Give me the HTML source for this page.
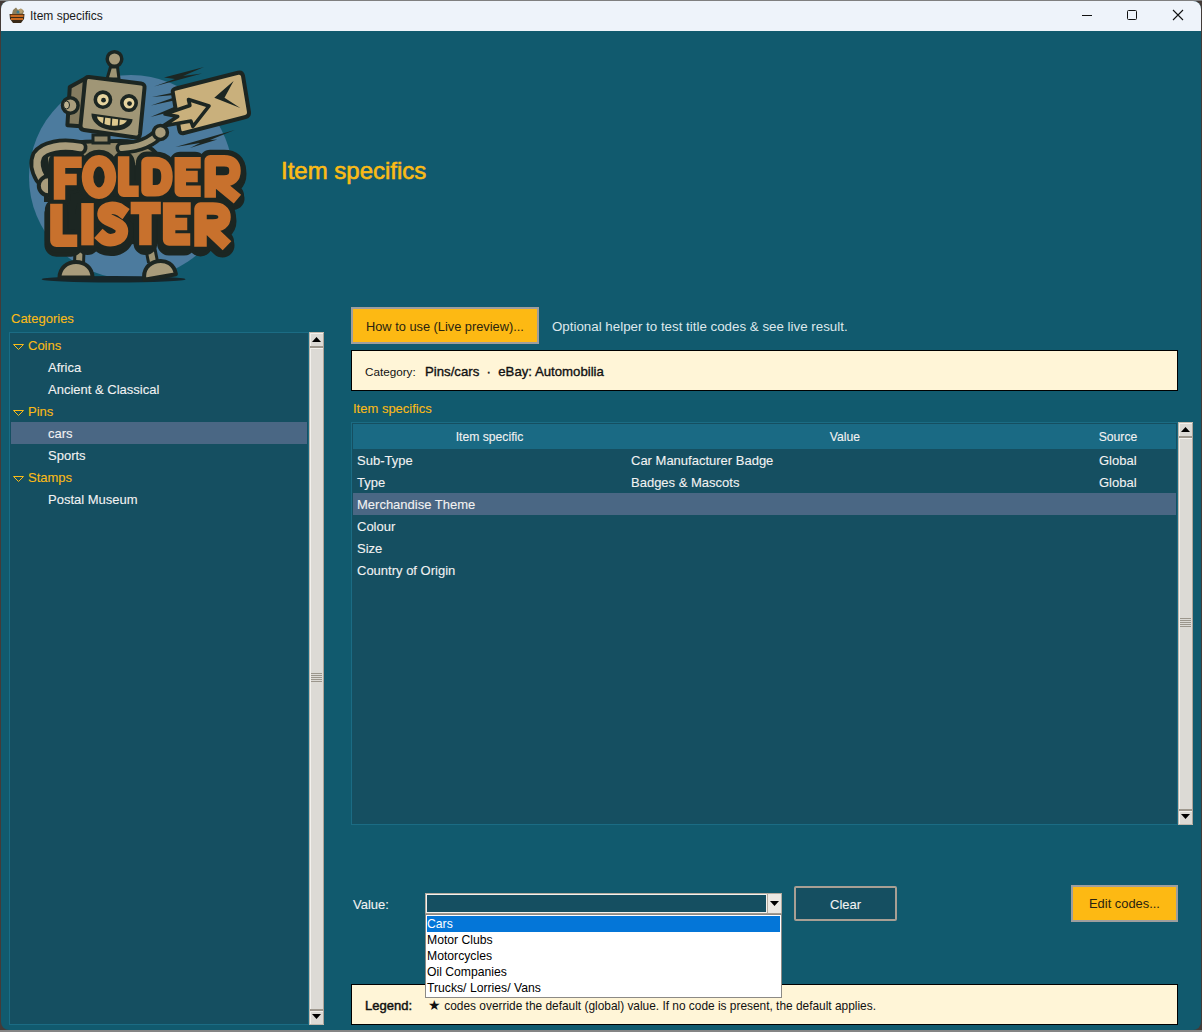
<!DOCTYPE html>
<html><head><meta charset="utf-8">
<style>
*{margin:0;padding:0;box-sizing:border-box}
html,body{width:1202px;height:1032px;overflow:hidden;background:#443b38;font-family:"Liberation Sans",sans-serif}
#win{position:absolute;left:1px;top:1px;width:1200px;height:1029px;background:#115a6e;border-radius:8px;overflow:hidden}
#title{position:absolute;left:1px;top:1px;width:1200px;height:30px;background:#eef3fa;border-radius:8px 8px 0 0}
.t{position:absolute;white-space:nowrap;line-height:1}
.y{color:#fbbb16;-webkit-text-stroke:0.1px #fbbb16}
.w{color:#f2f2f2;-webkit-text-stroke:0.1px #f2f2f2}
.panel{position:absolute;background:#154f61;border:1px solid #1b6c84}
.sb{position:absolute;background:#dcdad5;border-left:1px solid #f4f2ee;border-right:1px solid #a39d95}
.row{position:absolute;height:22px}
.sel{background:#4a6784}
.cream{position:absolute;background:#fff5d7;border:1px solid #000}
.btny{position:absolute;background:#fdb913;border:2px solid #9e9e9e}
.tri{position:absolute}
</style></head><body>
<div style="position:absolute;left:0;top:1030px;width:1202px;height:2px;background:#858585"></div>
<div style="position:absolute;left:0;top:0;width:1202px;height:1px;background:#7f7f7f"></div>
<div id="win"></div>
<div id="title"></div>
<div class="t" style="left:30px;top:10px;font-size:12px;color:#1a1a1a">Item specifics</div>


<div style="position:absolute;left:1082px;top:15px;width:10px;height:1px;background:#111"></div>
<div style="position:absolute;left:1127px;top:10px;width:10px;height:10px;border:1px solid #111;border-radius:1.5px"></div>
<svg style="position:absolute;left:1172px;top:9px" width="12" height="12"><path d="M1 1 L11 11 M11 1 L1 11" stroke="#111" stroke-width="1.1"/></svg>

<svg style="position:absolute;left:8px;top:6px" width="18" height="18" viewBox="0 0 18 18">
<path d="M5 4 L8 1.5 L10 4 L13 2.5 L16 5 L15 8 L4 8 Z" fill="#8c7d5a"/>
<circle cx="12.5" cy="5" r="2.3" fill="#b79e6e"/>
<circle cx="10" cy="6" r="1.5" fill="#3d7a8c"/>
<path d="M1.5 8 L16.5 8 L16 13 L13 17 L5 17 L2 13 Z" fill="#3a2a18"/>
<path d="M2.5 8.8 H15.5 V11 H2.5 Z M3 12 H15 V14 H3 Z" fill="#c86a20"/>
</svg>
<!-- LOGO -->
<svg style="position:absolute;left:0;top:0" width="300" height="300" viewBox="0 0 300 300">
  <defs>
    <clipPath id="circ"><rect x="0" y="0" width="300" height="277"/></clipPath>
  </defs>
  <circle cx="131" cy="177" r="102" fill="#4c7b9e" clip-path="url(#circ)"/>
  <ellipse cx="113.6" cy="279.3" rx="72" ry="3.2" fill="#16262a"/>
  <!-- speed lines -->
  <g fill="#1c2622">
    <path d="M164 77.5 L204 67 L183 76 L202 73.5 L154 86.5 L175 79 Z"/>
    <path d="M152 97 L174 92.5 L174 95 Z"/>
    <path d="M151 105.5 L174 97.5 L174 100.5 Z"/>
    <path d="M150.5 117 L174 107 L174 111 Z"/>
    <path d="M175.5 147 L234.7 130 L210 140 L217.4 139.5 L190 148 L200 143 Z"/>
  </g>
  <!-- legs -->
  <path d="M79.5 250 L79 264" stroke="#1c2622" stroke-width="12"/>
  <path d="M79.5 250 L79 265" stroke="#9f9574" stroke-width="6"/>
  <path d="M150 247 L153 262" stroke="#1c2622" stroke-width="12"/>
  <path d="M150 247 L153 262" stroke="#9f9574" stroke-width="6"/>
  <path d="M59.5 277.6 C59.5 268 67 262 76 262 C85 262 92.5 268 92.5 277.6 Z" fill="#a89c7b" stroke="#1c2622" stroke-width="4" stroke-linejoin="round"/>
  <g transform="rotate(-10 160 276)">
    <path d="M144 277 C144 267 151 261 160 261 C169 261 176 267 176 277 Z" fill="#a89c7b" stroke="#1c2622" stroke-width="4" stroke-linejoin="round"/>
  </g>
  <!-- torso -->
  <path d="M46 150 C60 142 90 141 120 141 C140 141 152 146 158 156 L160 200 L46 200 Z" fill="#8f8668" stroke="#1c2622" stroke-width="4"/>
  <!-- left arm -->
  <path d="M80 147.5 C62 144 44 147 38.5 156 C35 164 38 172 41.5 178" fill="none" stroke="#1c2622" stroke-width="15" stroke-linecap="round"/>
  <path d="M80 147.5 C62 144 44 147 38.5 156 C35 164 38 172 41.5 178" fill="none" stroke="#a89c7b" stroke-width="7.5" stroke-linecap="round"/>
  <circle cx="48.3" cy="185.8" r="9.5" fill="#a89c7b" stroke="#1c2622" stroke-width="4"/>
  <!-- right arm -->
  <path d="M122 148 C140 147 152 142 160 132" fill="none" stroke="#1c2622" stroke-width="13" stroke-linecap="round"/>
  <path d="M122 148 C140 147 152 142 160 132" fill="none" stroke="#a39979" stroke-width="6" stroke-linecap="round"/>
  <!-- envelope -->
  <path d="M176 88.5 L238 72.8 Q242 71.8 243 75.8 L249 112 Q249.6 116 245.6 117 L184 133 Q180 134 179.3 130 L172.8 92.5 Q172 89.5 176 88.5 Z" fill="#c9b07c" stroke="#1c2622" stroke-width="4" stroke-linejoin="round"/>
  <path d="M214.3 97.7 L233.6 81 L224.5 97.7 L240.3 107.9 Z" fill="#1c2622"/>
  <!-- arrow -->
  <path d="M163 126 L177.7 116.5 L165 114 L189.9 105.5 L188.5 99.5 L209 106 L192.9 126.5 L190.9 121 Z" fill="#c9b07c" stroke="#1c2622" stroke-width="3.6" stroke-linejoin="round"/>
  <circle cx="160.4" cy="132.4" r="7" fill="#a89c7b" stroke="#1c2622" stroke-width="3.5"/>
  <!-- neck -->
  <rect x="93" y="135" width="16" height="8" fill="#8f8668" stroke="#1c2622" stroke-width="3"/>
  <!-- antenna -->
  <path d="M110.5 67 L117.5 67 L119 79 L107 79 Z" fill="#9f9574" stroke="#1c2622" stroke-width="3" stroke-linejoin="round"/>
  <circle cx="114.5" cy="59" r="7.3" fill="#a89c7b" stroke="#1c2622" stroke-width="3.5"/>
  <!-- side block -->
  <path d="M69.8 86.9 L84.9 78.7 L83.7 126.4 L67.4 125.2 Z" fill="#857c60" stroke="#1c2622" stroke-width="4" stroke-linejoin="round"/>
  <circle cx="70.3" cy="105.5" r="7.8" fill="#a89c7b" stroke="#1c2622" stroke-width="3.5"/>
  <ellipse cx="66.5" cy="105" rx="3" ry="4" fill="#bdb190" stroke="#1c2622" stroke-width="1"/>
  <!-- head -->
  <path d="M89 77 L141 83.5 Q145 84 144.5 88 L140 134 Q139.5 138 135.5 137.5 L84 130 Q80 129.5 80.5 125.5 L85 81 Q85.5 76.5 89 77 Z" fill="#a09676" stroke="#1c2622" stroke-width="4" stroke-linejoin="round"/>
  <circle cx="102.9" cy="99.7" r="7.6" fill="#e6d49f" stroke="#1c2622" stroke-width="3.6"/>
  <circle cx="103.5" cy="100.2" r="2.4" fill="#1c2622"/>
  <circle cx="129" cy="103.1" r="7.2" fill="#e6d49f" stroke="#1c2622" stroke-width="3.6"/>
  <circle cx="129.5" cy="103.6" r="2.4" fill="#1c2622"/>
  <path d="M91.5 113.5 L132.6 119.2 C132 127 122 132 110 130 C98 128 91 121 91.5 113.5 Z" fill="#1c2622"/>
  <path d="M97 116.5 L127 120.5 C125 124 120 126.5 111 125.5 C102 124.5 98 121 97 116.5 Z" fill="#dcc88f"/>
  <path d="M104.5 117 L103.5 125 M111.5 118 L111 126 M119 119 L118.5 126.5" stroke="#1c2622" stroke-width="1.6"/>
  <!-- text block dark backing -->
  <path d="M56 168 L232 162 L234 196 L226 206 L222 242 L54 246 L52 204 Z" fill="#1c2622"/>
  <g fill="none" stroke="#1c2622" stroke-linecap="round" stroke-linejoin="round">
    <g stroke-width="23" transform="translate(0 3)"><path d="M59.5 162.5 V194 M59.5 162.3 H76 M59.5 179.5 H71"/>
<ellipse cx="99" cy="177" rx="11.5" ry="16.3"/>
<path d="M123.6 162 V191.2 H133"/>
<path d="M147 162.5 V190.7 H155 Q167 190.7 167 176.6 Q167 162.5 155 162.5 Z"/>
<path d="M180.3 162.8 V191.2 H195 M180.3 162.8 H195 M180.3 176.5 H192"/>
<path d="M210.2 192 V160.7 H224 Q235 160.7 235 170.7 Q235 181 224 181 H210.2 M221.5 186 L233 195.5"/></g>
    <g stroke-width="24" transform="translate(0 4)"><path d="M56.4 210 V240.8 H71"/>
<path d="M87.5 209.3 V239.1"/>
<path d="M121 210.5 C116 207 104 206 103.5 214 C103 221.5 122 221.5 122 231 C122 241 108 242 103 237.5"/>
<path d="M136.9 208 H154.6 M145.4 208 V239"/>
<path d="M169.1 208.6 V239.6 H184 M169.1 208.6 H184.5 M169.1 224 H181"/>
<path d="M200.5 240.5 V208.6 H213 Q224.5 208.6 224.5 217 Q224.5 225.5 213 225.5 H200.5 M211 230.5 L222.5 241.5"/></g>
    <g stroke-width="22"><path d="M59.5 162.5 V194 M59.5 162.3 H76 M59.5 179.5 H71"/>
<ellipse cx="99" cy="177" rx="11.5" ry="16.3"/>
<path d="M123.6 162 V191.2 H133"/>
<path d="M147 162.5 V190.7 H155 Q167 190.7 167 176.6 Q167 162.5 155 162.5 Z"/>
<path d="M180.3 162.8 V191.2 H195 M180.3 162.8 H195 M180.3 176.5 H192"/>
<path d="M210.2 192 V160.7 H224 Q235 160.7 235 170.7 Q235 181 224 181 H210.2 M221.5 186 L233 195.5"/></g>
    <g stroke-width="23"><path d="M56.4 210 V240.8 H71"/>
<path d="M87.5 209.3 V239.1"/>
<path d="M121 210.5 C116 207 104 206 103.5 214 C103 221.5 122 221.5 122 231 C122 241 108 242 103 237.5"/>
<path d="M136.9 208 H154.6 M145.4 208 V239"/>
<path d="M169.1 208.6 V239.6 H184 M169.1 208.6 H184.5 M169.1 224 H181"/>
<path d="M200.5 240.5 V208.6 H213 Q224.5 208.6 224.5 217 Q224.5 225.5 213 225.5 H200.5 M211 230.5 L222.5 241.5"/></g>
  </g>
  <g fill="none" stroke="#c8712d" stroke-linecap="square" stroke-linejoin="round">
    <g stroke-width="11.5"><path d="M59.5 162.5 V194 M59.5 162.3 H76 M59.5 179.5 H71"/>
<ellipse cx="99" cy="177" rx="11.5" ry="16.3"/>
<path d="M123.6 162 V191.2 H133"/>
<path d="M147 162.5 V190.7 H155 Q167 190.7 167 176.6 Q167 162.5 155 162.5 Z"/>
<path d="M180.3 162.8 V191.2 H195 M180.3 162.8 H195 M180.3 176.5 H192"/>
<path d="M210.2 192 V160.7 H224 Q235 160.7 235 170.7 Q235 181 224 181 H210.2 M221.5 186 L233 195.5"/></g>
    <g stroke-width="12.5"><path d="M56.4 210 V240.8 H71"/>
<path d="M87.5 209.3 V239.1"/>
<path d="M121 210.5 C116 207 104 206 103.5 214 C103 221.5 122 221.5 122 231 C122 241 108 242 103 237.5"/>
<path d="M136.9 208 H154.6 M145.4 208 V239"/>
<path d="M169.1 208.6 V239.6 H184 M169.1 208.6 H184.5 M169.1 224 H181"/>
<path d="M200.5 240.5 V208.6 H213 Q224.5 208.6 224.5 217 Q224.5 225.5 213 225.5 H200.5 M211 230.5 L222.5 241.5"/></g>
  </g>
</svg>
<!-- /LOGO -->
<!-- heading -->
<div class="t y" style="left:281px;top:159px;font-size:24px;-webkit-text-stroke:0.6px #fbbb16">Item specifics</div>

<!-- categories -->
<div class="t y" style="left:11px;top:312px;font-size:13px">Categories</div>
<div class="panel" style="left:9px;top:332px;width:300px;height:693px"></div>
<div class="row sel" style="left:11px;top:422px;width:296px"></div>
<div style="position:absolute;left:309px;top:332px;width:15px;height:693px;background:#dcdad5"></div>
<div style="position:absolute;left:309px;top:332px;width:1px;height:693px;background:#c2b9ae"></div>
<div style="position:absolute;left:310px;top:332px;width:1px;height:693px;background:#f3f1ed"></div>
<div style="position:absolute;left:323px;top:332px;width:1px;height:693px;background:#aca398"></div>
<div style="position:absolute;left:309px;top:332px;width:15px;height:1px;background:#c2b9ae"></div>
<div style="position:absolute;left:310px;top:333px;width:13px;height:1px;background:#f3f1ed"></div>
<div style="position:absolute;left:309px;top:1024px;width:15px;height:1px;background:#c2b9ae"></div>
<div style="position:absolute;left:310px;top:346px;width:13px;height:2px;background:#9e988e"></div>
<div style="position:absolute;left:310px;top:348px;width:13px;height:1px;background:#f3f1ed"></div>
<div style="position:absolute;left:310px;top:1009px;width:13px;height:2px;background:#9e988e"></div>
<div style="position:absolute;left:310px;top:1011px;width:13px;height:1px;background:#f3f1ed"></div>
<svg style="position:absolute;left:309px;top:332px" width="15" height="14"><path d="M3 10 H12 L7.5 5 Z" fill="#000"/></svg>
<svg style="position:absolute;left:309px;top:1011px" width="15" height="14"><path d="M3 3 H12 L7.5 8 Z" fill="#000"/></svg>
<div style="position:absolute;left:311px;top:673px;width:11px;height:1px;background:#9b968c"></div>
<div style="position:absolute;left:311px;top:675px;width:11px;height:1px;background:#9b968c"></div>
<div style="position:absolute;left:311px;top:677px;width:11px;height:1px;background:#9b968c"></div>
<div style="position:absolute;left:311px;top:679px;width:11px;height:1px;background:#9b968c"></div>
<div style="position:absolute;left:311px;top:681px;width:11px;height:1px;background:#9b968c"></div>

<div class="t y" style="left:28px;top:339px;font-size:13px">Coins</div>
<div class="t w" style="left:48px;top:361px;font-size:13px">Africa</div>
<div class="t w" style="left:48px;top:383px;font-size:13px">Ancient &amp; Classical</div>
<div class="t y" style="left:28px;top:405px;font-size:13px">Pins</div>
<div class="t w" style="left:48px;top:427px;font-size:13px">cars</div>
<div class="t w" style="left:48px;top:449px;font-size:13px">Sports</div>
<div class="t y" style="left:28px;top:471px;font-size:13px">Stamps</div>
<div class="t w" style="left:48px;top:493px;font-size:13px">Postal Museum</div>

<!-- how to use -->
<div class="btny" style="left:351px;top:307px;width:188px;height:37px"></div>
<div class="t" style="left:366px;top:321px;font-size:12.8px;color:#2a2410">How to use (Live preview)...</div>
<div class="t" style="left:552px;top:320px;font-size:13.33px;color:#dde8ec">Optional helper to test title codes &amp; see live result.</div>

<div class="cream" style="left:351px;top:350px;width:827px;height:41px"></div>
<div class="t" style="left:365px;top:366px;font-size:11.7px;color:#111">Category:</div>
<div class="t" style="left:425px;top:365px;font-size:13.2px;color:#111;-webkit-text-stroke:0.35px #111">Pins/cars &nbsp;·&nbsp; eBay: Automobilia</div>

<div class="t y" style="left:353px;top:402px;font-size:13px">Item specifics</div>

<!-- list -->
<div class="panel" style="left:351px;top:422px;width:827px;height:403px"></div>
<div class="abs" style="position:absolute;left:353px;top:424px;width:823px;height:25px;background:#1a6a84"></div>
<div class="row sel" style="left:353px;top:493px;width:823px"></div>
<div style="position:absolute;left:1178px;top:422px;width:15px;height:403px;background:#dcdad5"></div>
<div style="position:absolute;left:1178px;top:422px;width:1px;height:403px;background:#c2b9ae"></div>
<div style="position:absolute;left:1179px;top:422px;width:1px;height:403px;background:#f3f1ed"></div>
<div style="position:absolute;left:1192px;top:422px;width:1px;height:403px;background:#aca398"></div>
<div style="position:absolute;left:1178px;top:422px;width:15px;height:1px;background:#c2b9ae"></div>
<div style="position:absolute;left:1179px;top:423px;width:13px;height:1px;background:#f3f1ed"></div>
<div style="position:absolute;left:1178px;top:824px;width:15px;height:1px;background:#c2b9ae"></div>
<div style="position:absolute;left:1179px;top:436px;width:13px;height:2px;background:#9e988e"></div>
<div style="position:absolute;left:1179px;top:438px;width:13px;height:1px;background:#f3f1ed"></div>
<div style="position:absolute;left:1179px;top:809px;width:13px;height:2px;background:#9e988e"></div>
<div style="position:absolute;left:1179px;top:811px;width:13px;height:1px;background:#f3f1ed"></div>
<svg style="position:absolute;left:1178px;top:422px" width="15" height="14"><path d="M3 10 H12 L7.5 5 Z" fill="#000"/></svg>
<svg style="position:absolute;left:1178px;top:811px" width="15" height="14"><path d="M3 3 H12 L7.5 8 Z" fill="#000"/></svg>
<div style="position:absolute;left:1180px;top:618px;width:11px;height:1px;background:#9b968c"></div>
<div style="position:absolute;left:1180px;top:620px;width:11px;height:1px;background:#9b968c"></div>
<div style="position:absolute;left:1180px;top:622px;width:11px;height:1px;background:#9b968c"></div>
<div style="position:absolute;left:1180px;top:624px;width:11px;height:1px;background:#9b968c"></div>
<div style="position:absolute;left:1180px;top:626px;width:11px;height:1px;background:#9b968c"></div>


<div class="t w" style="left:389.5px;width:200px;text-align:center;top:431px;font-size:12.2px">Item specific</div>
<div class="t w" style="left:745px;width:200px;text-align:center;top:431px;font-size:12.2px">Value</div>
<div class="t w" style="left:1018px;width:200px;text-align:center;top:431px;font-size:12.2px">Source</div>

<div class="t w" style="left:357px;top:454px;font-size:13px">Sub-Type</div>
<div class="t w" style="left:631px;top:454px;font-size:13px">Car Manufacturer Badge</div>
<div class="t w" style="left:1099px;top:454px;font-size:13px">Global</div>
<div class="t w" style="left:357px;top:476px;font-size:13px">Type</div>
<div class="t w" style="left:631px;top:476px;font-size:13px">Badges &amp; Mascots</div>
<div class="t w" style="left:1099px;top:476px;font-size:13px">Global</div>
<div class="t w" style="left:357px;top:498px;font-size:13px">Merchandise Theme</div>
<div class="t w" style="left:357px;top:520px;font-size:13px">Colour</div>
<div class="t w" style="left:357px;top:542px;font-size:13px">Size</div>
<div class="t w" style="left:357px;top:564px;font-size:13px">Country of Origin</div>

<!-- bottom -->
<div class="t w" style="left:353px;top:898px;font-size:13px">Value:</div>
<div style="position:absolute;left:425px;top:893px;width:357px;height:22px;background:#b3ab9f"></div>
<div style="position:absolute;left:426px;top:894px;width:355px;height:19px;background:#f4f2ee"></div>
<div style="position:absolute;left:427px;top:895px;width:339px;height:17px;background:#154f61"></div>
<div style="position:absolute;left:767px;top:894px;width:1px;height:19px;background:#b3ab9f"></div>
<div style="position:absolute;left:768px;top:894px;width:13px;height:19px;background:#ebe8e3"></div>
<div style="position:absolute;left:425px;top:913px;width:357px;height:1px;background:#a39b90"></div>

<svg style="position:absolute;left:769px;top:900px" width="11" height="8"><path d="M1 1 H10 L5.5 6 Z" fill="#000"/></svg>

<div class="abs" style="position:absolute;left:794px;top:886px;width:103px;height:35px;background:#154f61;border:2px solid #a89f94;border-radius:2px"></div>
<div class="t w" style="left:830px;top:898px;font-size:13px">Clear</div>

<div class="btny" style="left:1071px;top:885px;width:107px;height:37px"></div>
<div class="t" style="left:1089px;top:898px;font-size:12.9px;color:#2a2410">Edit codes...</div>

<div class="cream" style="left:351px;top:984px;width:827px;height:41px"></div>
<div class="t" style="left:365px;top:999px;font-size:13px;color:#111;-webkit-text-stroke:0.45px #111">Legend:</div>
<div class="t" style="left:428px;top:1001px;font-size:11.9px;color:#111"><span style="font-size:14px;line-height:0">★</span> codes override the default (global) value. If no code is present, the default applies.</div>

<!-- dropdown list -->
<div class="abs" style="position:absolute;left:425px;top:914px;width:357px;height:84px;background:#fff;border:1px solid #8c8a86"></div>
<div class="abs" style="position:absolute;left:427px;top:916px;width:353px;height:16px;background:#0476d8"></div>
<div class="t" style="left:427px;top:918px;font-size:12.2px;color:#fff">Cars</div>
<div class="t" style="left:427px;top:934px;font-size:12.2px;color:#000">Motor Clubs</div>
<div class="t" style="left:427px;top:950px;font-size:12.2px;color:#000">Motorcycles</div>
<div class="t" style="left:427px;top:966px;font-size:12.2px;color:#000">Oil Companies</div>
<div class="t" style="left:427px;top:982px;font-size:12.2px;color:#000">Trucks/ Lorries/ Vans</div>

<svg style="position:absolute;left:12px;top:344px" width="14" height="9"><path d="M1.5 0.5 H11.5 L6.5 5.5 Z" fill="none" stroke="#fbbb16" stroke-width="1"/></svg><svg style="position:absolute;left:12px;top:410px" width="14" height="9"><path d="M1.5 0.5 H11.5 L6.5 5.5 Z" fill="none" stroke="#fbbb16" stroke-width="1"/></svg><svg style="position:absolute;left:12px;top:476px" width="14" height="9"><path d="M1.5 0.5 H11.5 L6.5 5.5 Z" fill="none" stroke="#fbbb16" stroke-width="1"/></svg>
</body></html>
